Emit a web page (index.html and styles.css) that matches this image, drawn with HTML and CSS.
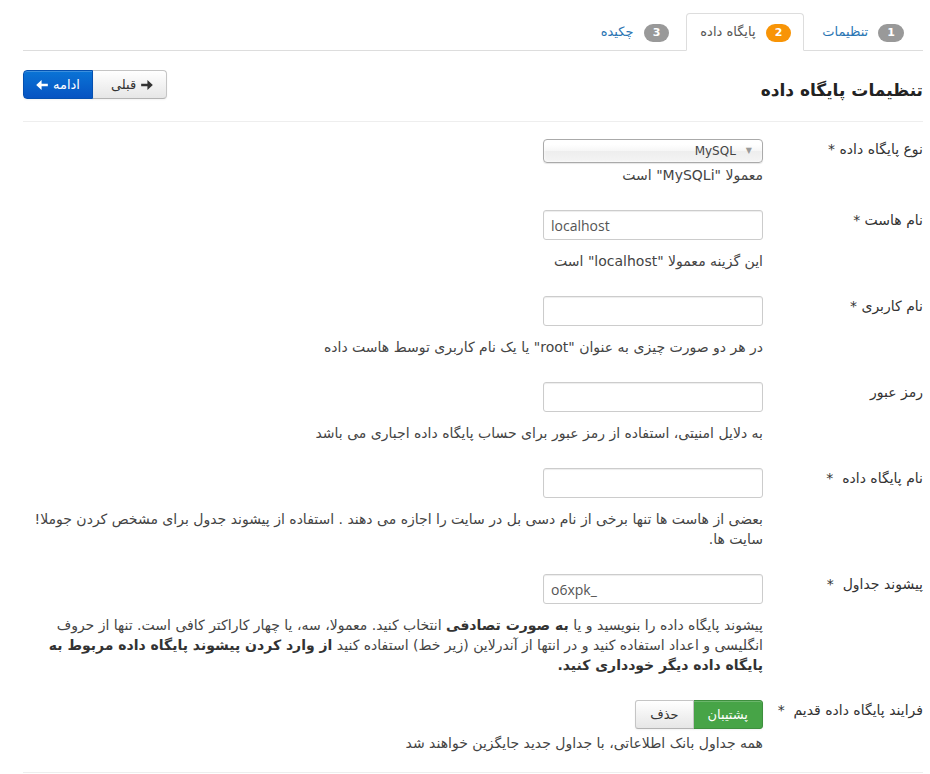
FILE: index.html
```html
<!DOCTYPE html>
<html lang="fa" dir="rtl">
<head>
    <meta charset="UTF-8">
    <title>نصب جوملا - پایگاه داده</title>
    <link rel="stylesheet" href="styles.css">
</head>
<body>
    <div class="container">
        <ul class="tabs">
            <li class="tab"><span class="badge">1</span> تنظیمات</li>
            <li class="tab active"><span class="badge badge-warning">2</span> پایگاه داده</li>
            <li class="tab"><span class="badge">3</span> چکیده</li>
        </ul>

        <div class="page-head">
            <h3>تنظیمات پایگاه داده</h3>
            <div class="btn-group">
                <a class="btn" href="#">
                    <svg class="icon" viewBox="0 0 14 12" width="12" height="10"><path d="M14 4.5H6.5V0L0 6l6.5 6V7.5H14z" transform="matrix(-1 0 0 1 14 0)"/></svg>
                    قبلی
                </a>
                <a class="btn btn-primary" href="#">
                    ادامه
                    <svg class="icon" viewBox="0 0 14 12" width="12" height="10"><path d="M14 4.5H6.5V0L0 6l6.5 6V7.5H14z"/></svg>
                </a>
            </div>
        </div>
        <hr>

        <div class="control-group">
            <label class="control-label">نوع پایگاه داده *</label>
            <div class="controls">
                <div class="chzn-single"><span class="arrow">&#9660;</span><span>MySQL</span></div>
                <p class="help-block tight">معمولا "MySQLi" است</p>
            </div>
        </div>

        <div class="control-group">
            <label class="control-label">نام هاست *</label>
            <div class="controls">
                <input class="field" type="text" value="localhost">
                <p class="help-block">این گزینه معمولا "localhost" است</p>
            </div>
        </div>

        <div class="control-group">
            <label class="control-label">نام کاربری *</label>
            <div class="controls">
                <input class="field" type="text" value="">
                <p class="help-block">در هر دو صورت چیزی به عنوان "root" یا یک نام کاربری توسط هاست داده</p>
            </div>
        </div>

        <div class="control-group">
            <label class="control-label">رمز عبور</label>
            <div class="controls">
                <input class="field" type="password" value="">
                <p class="help-block">به دلایل امنیتی، استفاده از رمز عبور برای حساب پایگاه داده اجباری می باشد</p>
            </div>
        </div>

        <div class="control-group">
            <label class="control-label">نام پایگاه داده &nbsp;*</label>
            <div class="controls">
                <input class="field" type="text" value="">
                <p class="help-block">بعضی از هاست ها تنها برخی از نام دسی بل در سایت را اجازه می دهند . استفاده از پیشوند جدول برای مشخص کردن جوملا! سایت ها.</p>
            </div>
        </div>

        <div class="control-group">
            <label class="control-label">پیشوند جداول &nbsp;*</label>
            <div class="controls">
                <input class="field" type="text" value="o6xpk_">
                <p class="help-block">پیشوند پایگاه داده را بنویسید و یا <strong>به صورت تصادفی</strong> انتخاب کنید. معمولا، سه، یا چهار کاراکتر کافی است. تنها از حروف انگلیسی و اعداد استفاده کنید و در انتها از آندرلاین (زیر خط) استفاده کنید <strong>از وارد کردن پیشوند پایگاه داده مربوط به پایگاه داده دیگر خودداری کنید.</strong></p>
            </div>
        </div>

        <div class="control-group last">
            <label class="control-label">فرایند پایگاه داده قدیم &nbsp;*</label>
            <div class="controls">
                <div class="radio-group">
                    <span class="btn btn-success">پشتیبان</span>
                    <span class="btn">حذف</span>
                </div>
                <p class="help-block under-btn">همه جداول بانک اطلاعاتی، با جداول جدید جایگزین خواهند شد</p>
            </div>
        </div>
        <hr>
    </div>
</body>
</html>
```

FILE: styles.css
```css
body {
    margin: 0;
    font-family: Tahoma, "DejaVu Sans", sans-serif;
    font-size: 13px;
    line-height: 20px;
    color: #333;
    background: #fff;
}
.container {
    margin: 0 7px 0 23px;
    padding-top: 13px;
}
.tabs {
    list-style: none;
    margin: 0;
    padding: 0 6px 0 0;
    display: flex;
    border-bottom: 1px solid #ddd;
}
.tab {
    padding: 8px 12px 8px 13px;
    margin-left: 4px;
    margin-bottom: -1px;
    line-height: 20px;
    color: #2a75b3;
    font-size: 13px;
    border: 1px solid transparent;
    border-radius: 4px 4px 0 0;
}
.tab.active {
    color: #555;
    background: #fff;
    border-color: #ddd #ddd transparent;
}
.badge {
    display: inline-block;
    background: #999;
    color: #fff;
    font-size: 11px;
    font-weight: bold;
    line-height: 14px;
    padding: 2px 9px;
    border-radius: 9px;
    margin-left: 6px;
}
.badge-warning {
    background: #f89406;
}
.page-head {
    display: flex;
    justify-content: space-between;
    align-items: center;
    margin-top: 19px;
    height: 32px;
}
.page-head h3 {
    margin: 0;
    padding-top: 8px;
    font-size: 17px;
    font-weight: bold;
    color: #222;
}
hr {
    border: 0;
    border-top: 1px solid #eee;
    margin: 19px 0 17px;
}
.btn-group {
    display: flex;
    align-self: flex-start;
}
.btn {
    display: inline-flex;
    align-items: center;
    gap: 5px;
    height: 27px;
    padding: 0 12px;
    font-size: 13px;
    color: #333;
    text-decoration: none;
    background: linear-gradient(#ffffff, #e6e6e6);
    border: 1px solid #c5c5c5;
    border-bottom-color: #b3b3b3;
    box-shadow: inset 0 1px 0 rgba(255,255,255,.2), 0 1px 2px rgba(0,0,0,.05);
}
.btn-group .btn:first-child {
    border-radius: 0 4px 4px 0;
    padding: 0 13px 0 18px;
}
.btn-group .btn:last-child {
    border-radius: 4px 0 0 4px;
    margin-right: -1px;
}
.btn-primary {
    color: #fff;
    background: linear-gradient(#0a74d6, #0653c2);
    border-color: #0550b0;
}
.icon {
    fill: currentColor;
}
.control-group {
    display: flex;
    margin-bottom: 25px;
}
.control-group.last {
    margin-bottom: 0;
}
.control-label {
    width: 140px;
    margin-left: 20px;
    padding-top: 1px;
    line-height: 18px;
    font-size: 14px;
    white-space: nowrap;
    flex-shrink: 0;
}
.controls {
    flex: 1;
}
.field {
    display: block;
    box-sizing: border-box;
    width: 220px;
    height: 30px;
    padding: 4px 7px;
    direction: ltr;
    font-family: "Open Sans", "DejaVu Sans", sans-serif;
    font-size: 14px;
    color: #555;
    border: 1px solid #ccc;
    border-radius: 3px;
    box-shadow: inset 0 1px 1px rgba(0,0,0,.075);
}
.chzn-single {
    box-sizing: border-box;
    width: 220px;
    height: 24px;
    display: flex;
    align-items: center;
    padding: 0 10px 0 0;
    border: 1px solid #aaa;
    border-radius: 4px;
    background: linear-gradient(#ffffff 20%, #f6f6f6 50%, #eeeeee 52%, #f4f4f4);
    box-shadow: 0 0 3px #fff inset, 0 1px 1px rgba(0,0,0,.1);
    font-size: 12px;
    color: #444;
}
.chzn-single .arrow {
    font-size: 8px;
    color: #999;
    margin-left: 10px;
}
.help-block {
    margin: 11px 0 0;
    color: #444;
    font-size: 14px;
}
.help-block.tight {
    margin-top: 2px;
    margin-bottom: 0;
}
.help-block.under-btn {
    margin-top: 4px;
}
.help-block strong {
    color: #333;
}
.radio-group {
    display: flex;
}
.radio-group .btn {
    padding: 0 14px;
}
.radio-group .btn:first-child {
    border-radius: 0 3px 3px 0;
}
.radio-group .btn:last-child {
    border-radius: 3px 0 0 3px;
    margin-right: -1px;
}
.btn-success {
    color: #fff;
    background: #47a447;
    border-color: #3e8f3e;
}
```
